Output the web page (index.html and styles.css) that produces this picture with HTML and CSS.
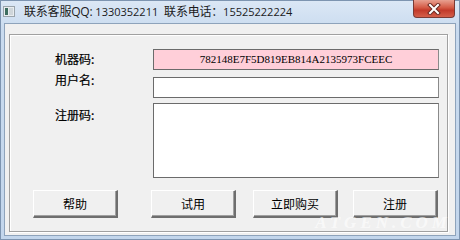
FILE: index.html
```html
<!DOCTYPE html>
<html>
<head>
<meta charset="utf-8">
<link rel="stylesheet" href="styles.css">
</head>
<body>
<div class="window">
  <div class="titlebar">
    <svg class="appicon" width="12" height="11" viewBox="0 0 12 11">
      <rect x="0.5" y="0.5" width="11" height="10" fill="#e8ecef" stroke="#9aa4ab"/>
      <rect x="2" y="2" width="3" height="7" fill="#3d6d5f"/>
      <rect x="6" y="2" width="4" height="7" fill="#cfd6da"/>
    </svg>
    <span class="title">联系客服QQ: <span class="num">1330352211</span>&nbsp;&nbsp;联系电话：<span class="num">15525222224</span></span>
    <div class="close">
      <svg width="14" height="12" viewBox="0 0 14 12">
        <path d="M3 2 L11 10 M11 2 L3 10" stroke="#6a2a22" stroke-width="4" stroke-linecap="square"/>
        <path d="M3 2 L11 10 M11 2 L3 10" stroke="#ffffff" stroke-width="2" stroke-linecap="square"/>
      </svg>
    </div>
  </div>
  <div class="client">
    <div class="panel">
      <div class="form">
        <div class="label l1">机器码:</div>
        <div class="field code">782148E7F5D819EB814A2135973FCEEC</div>
        <div class="label l2">用户名:</div>
        <div class="field"></div>
        <div class="label l3">注册码:</div>
        <div class="field area"></div>
      </div>
      <div class="buttons">
        <div class="btn b1">帮助</div>
        <div class="btn b2">试用</div>
        <div class="btn b3">立即购买</div>
        <div class="btn b4">注册</div>
      </div>
      <div class="watermark">ATGEN.COM</div>
    </div>
  </div>
</div>
</body>
</html>
```
FILE: styles.css
```css
html, body {
  margin: 0;
  padding: 0;
  background: #c6d9ee;
}
.window {
  width: 460px;
  height: 240px;
  box-sizing: border-box;
  border: 1px solid #7d94b0;
  background: linear-gradient(#dbe7f5, #c9dbef 30px, #c3d6ec);
  display: flex;
  flex-direction: column;
  font-family: "Noto Sans CJK SC", sans-serif;
}
.titlebar {
  height: 22px;
  display: flex;
  align-items: center;
  position: relative;
}
.appicon {
  margin-left: 2px;
  margin-top: -2px;
}
.title {
  margin-left: 9px;
  margin-top: -3px;
  font-family: "Open Sans", "Noto Sans CJK SC", sans-serif;
  font-size: 12px;
  letter-spacing: -0.2px;
  color: #1b1b1b;
  white-space: nowrap;
}
.num {
  letter-spacing: 0;
  font-size: 11px;
}
.close {
  position: absolute;
  right: 4px;
  top: -1px;
  width: 42px;
  height: 18px;
  box-sizing: border-box;
  border: 1px solid #7a3a34;
  border-top: none;
  border-radius: 0 0 4px 4px;
  background: linear-gradient(#e8a090, #d45a45 45%, #c23a2a 60%, #d45f4a);
  display: flex;
  align-items: center;
  justify-content: center;
}
.client {
  flex: 1;
  margin: 0 3px 3px 3px;
  border: 1px solid #8ea3bb;
  background: #f0f0f0;
  padding: 10px 7px 3px 4px;
  display: flex;
}
.panel {
  flex: 1;
  border: 1px solid #a0a0a0;
  box-shadow: inset 1px 1px #ffffff, 1px 1px #ffffff;
  padding-top: 14px;
  position: relative;
}
.form {
  display: grid;
  grid-template-columns: 143px 286px;
  grid-template-rows: 21px 21px 75px;
  row-gap: 7px;
  align-items: start;
}
.label {
  font-size: 12px;
  color: #000;
  padding-left: 45px;
  line-height: 14px;
  font-weight: 400;
  -webkit-text-stroke: 0.2px #000;
}
.l1 { margin-top: 3px; }
.l2 { margin-top: -4px; }
.l3 { margin-top: 3px; }
.field {
  height: 21px;
  box-sizing: border-box;
  border: 1px solid #6b6b6b;
  border-right-color: #8a8a8a;
  background: #ffffff;
}
.code {
  background: #ffcfd9;
  font-family: "Liberation Serif", serif;
  font-size: 11px;
  text-align: center;
  line-height: 19px;
  color: #000;
}
.area {
  height: 75px;
  margin-top: -2px;
}
.buttons {
  display: flex;
  margin-top: 10px;
}
.btn {
  width: 85px;
  height: 28px;
  box-sizing: border-box;
  background: #f0f0f0;
  border-top: 1px solid #ffffff;
  border-left: 1px solid #ffffff;
  border-right: 2px solid #6e6e6e;
  border-bottom: 2px solid #6e6e6e;
  box-shadow: inset -1px -1px #a0a0a0;
  font-size: 12px;
  display: flex;
  align-items: center;
  justify-content: center;
  color: #000;
}
.b1 { margin-left: 23px; }
.b2 { margin-left: 33px; }
.b3 { margin-left: 17px; }
.b4 { margin-left: 15px; }
.watermark {
  position: absolute;
  right: -4px;
  bottom: -2px;
  font-family: "Liberation Serif", serif;
  font-style: italic;
  font-weight: bold;
  font-size: 17px;
  letter-spacing: 4px;
  color: rgba(255, 255, 255, 0.6);
}
```
